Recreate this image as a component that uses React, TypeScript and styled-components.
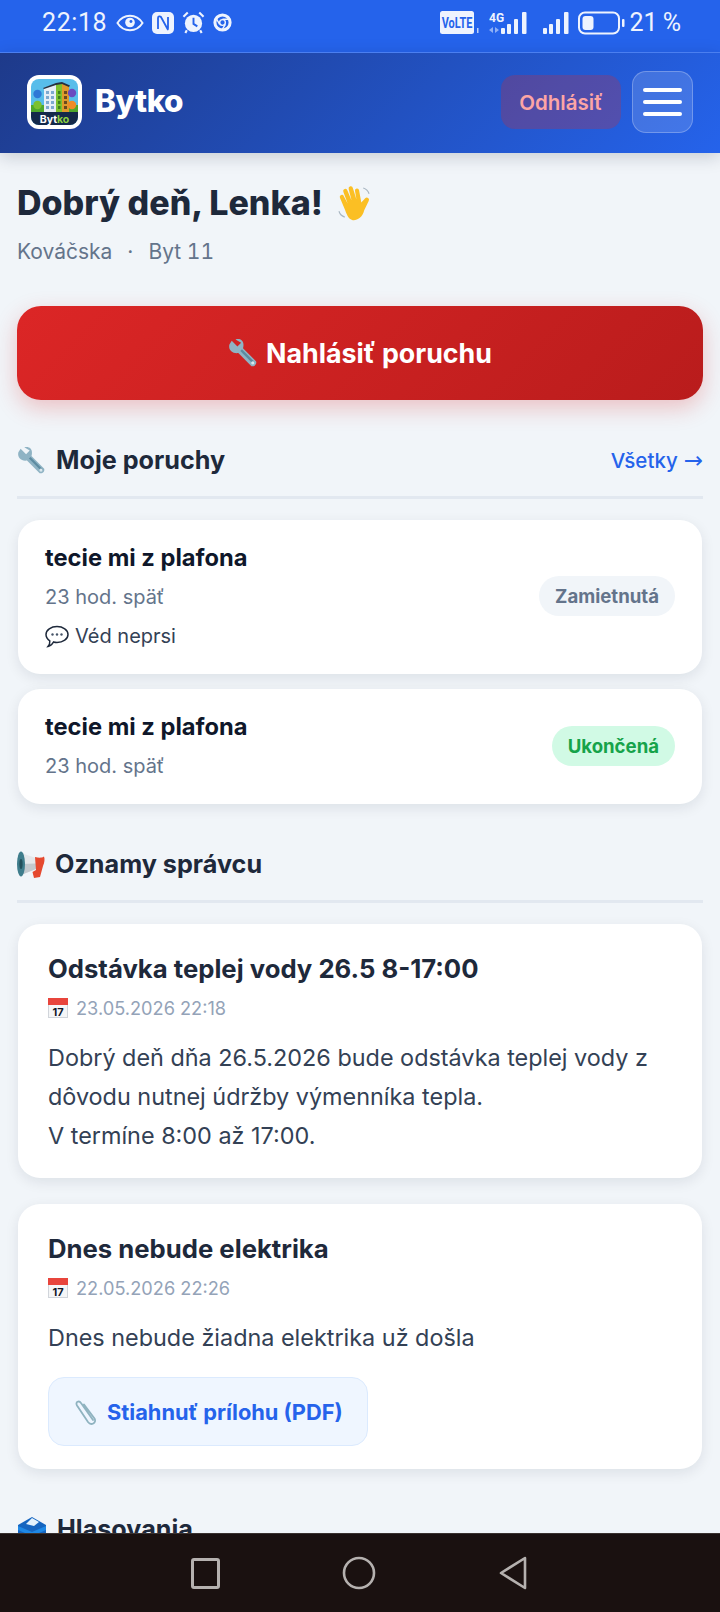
import styled, { createGlobalStyle } from "styled-components";

const GlobalStyle = createGlobalStyle`
  html, body {
    margin: 0;
    padding: 0;
    background: #f1f5f9;
  }
  * {
    box-sizing: border-box;
  }
`;

const Screen = styled.div`
  width: 720px;
  height: 1612px;
  display: flex;
  flex-direction: column;
  overflow: hidden;
  font-family: Inter, "Noto Sans", sans-serif;
  color: #1e293b;
  background: #f1f5f9;
`;

const StatusBar = styled.div`
  height: 52px;
  flex: none;
  display: flex;
  align-items: center;
  justify-content: space-between;
  padding: 0 39px 7px 42px;
  background: #2563eb;
  color: #eef3fe;
  font-family: Roboto, sans-serif;
`;

const StatusGroup = styled.div`
  display: flex;
  align-items: center;
  gap: 8px;
`;

const Clock = styled.span`
  font-size: 25px;
  letter-spacing: 0.6px;
  margin-right: 1px;
`;

const SignalSlot = styled.span`
  display: flex;
  margin: 0 0 0 7px;
`;

const Percent = styled.span`
  margin-left: -4px;
  font-size: 25px;
  word-spacing: -1px;
`;

const Header = styled.header`
  height: 101px;
  flex: none;
  display: flex;
  align-items: center;
  padding: 0 27px 2px;
  border-top: 1px solid #4b7ff0;
  background: linear-gradient(135deg, #1e3a8a, #2563eb);
  box-shadow: 0 4px 16px rgba(15, 23, 42, 0.18);
  position: relative;
`;

const Logo = styled.div`
  width: 55px;
  height: 54px;
  border-radius: 12px;
  background: #fff;
  padding: 4px;
  flex: none;
`;

const Brand = styled.span`
  margin: 0 0 3px 13px;
  flex: 1;
  font-size: 31.5px;
  font-weight: 800;
  letter-spacing: -0.5px;
  color: #fff;
`;

const LogoutButton = styled.button`
  width: 120px;
  height: 54px;
  border: 0;
  border-radius: 14px;
  background: rgba(220, 38, 38, 0.25);
  color: #fca5a5;
  font: 600 20.5px Inter, sans-serif;
`;

const MenuButton = styled.button`
  width: 61px;
  height: 62px;
  margin-left: 11px;
  border-radius: 14px;
  border: 1px solid rgba(255, 255, 255, 0.25);
  background: rgba(255, 255, 255, 0.14);
  display: flex;
  flex-direction: column;
  align-items: center;
  justify-content: center;
  gap: 8px;
  padding: 0;
`;

const MenuBar = styled.span`
  width: 39px;
  height: 4px;
  border-radius: 2px;
  background: #fff;
`;

const Main = styled.main`
  flex: 1;
  min-height: 0;
  overflow: hidden;
  padding: 29px 17px 0;
`;

const Greeting = styled.h1`
  margin: 0;
  display: flex;
  align-items: center;
  gap: 14px;
  font-size: 34px;
  line-height: 42px;
  font-weight: 800;
`;

const SubLine = styled.div`
  margin-top: 14px;
  display: flex;
  gap: 15px;
  font-size: 21px;
  line-height: 28px;
  color: #64748b;
  font-variant-numeric: tabular-nums;
`;

const ReportButton = styled.button`
  width: 686px;
  height: 94px;
  margin-top: 40px;
  display: flex;
  align-items: center;
  justify-content: center;
  gap: 8px;
  border: 0;
  border-radius: 24px;
  background: linear-gradient(135deg, #dc2626, #b91c1c);
  box-shadow: 0 8px 22px rgba(220, 38, 38, 0.25);
  color: #fff;
  font: 700 26.8px Inter, sans-serif;
`;

const SectionHead = styled.div<{ $top: number }>`
  display: flex;
  align-items: center;
  justify-content: space-between;
  height: 58px;
  margin-top: ${(p) => p.$top}px;
  padding-bottom: 17px;
  border-bottom: 3px solid #e2e8f0;
`;

const SectionTitle = styled.h2`
  margin: 0;
  display: flex;
  align-items: center;
  gap: 10px;
  font-size: 25.2px;
  font-weight: 700;
`;

const AllLink = styled.a`
  display: flex;
  gap: 6px;
  align-items: center;
  font-size: 20.5px;
  font-weight: 500;
  color: #2563eb;
`;

const LinkArrow = styled.span`
  font-family: "DejaVu Sans", sans-serif;
  font-size: 23px;
  line-height: 1;
`;

const IssueCard = styled.div<{ $top: number }>`
  margin: ${(p) => p.$top}px 1px 0;
  display: flex;
  align-items: center;
  justify-content: space-between;
  padding: 21px 27px 23px 27px;
  border-radius: 22px;
  background: #fff;
  box-shadow: 0 4px 14px rgba(15, 23, 42, 0.09);
`;

const IssueTitle = styled.div`
  font-size: 23.7px;
  line-height: 34px;
  font-weight: 700;
  color: #0f172a;
`;

const IssueTime = styled.div`
  margin-top: 7px;
  font-size: 20px;
  line-height: 30px;
  color: #64748b;
`;

const IssueNote = styled.div`
  margin-top: 9px;
  display: flex;
  align-items: center;
  gap: 6px;
  font-size: 20px;
  line-height: 30px;
  color: #334155;
`;

const Badge = styled.span<{ $green?: boolean }>`
  padding: 8px 16px;
  border-radius: 20px;
  font-size: 18.6px;
  line-height: 24px;
  font-weight: 700;
  background: ${(p) => (p.$green ? "#d1fae5" : "#f1f5f9")};
  color: ${(p) => (p.$green ? "#16a34a" : "#64748b")};
`;

const NoticeCard = styled.article<{ $top: number }>`
  margin: ${(p) => p.$top}px 1px 0;
  padding: 27px 30px 23px;
  border-radius: 22px;
  background: #fff;
  box-shadow: 0 4px 14px rgba(15, 23, 42, 0.09);
`;

const NoticeTitle = styled.h3`
  margin: 0;
  font-size: 25.7px;
  line-height: 36px;
  font-weight: 700;
`;

const NoticeDate = styled.div`
  margin-top: 8px;
  display: flex;
  align-items: center;
  gap: 8px;
  font-size: 18.2px;
  line-height: 26px;
  color: #94a3b8;
`;

const NoticeBody = styled.p`
  margin: 17px 0 0;
  font-size: 23.4px;
  line-height: 39px;
  color: #334155;
`;

const Attachment = styled.a`
  display: flex;
  width: fit-content;
  align-items: center;
  gap: 8px;
  height: 69px;
  margin-top: 20px;
  padding: 0 24px;
  border: 1px solid #dbeafe;
  border-radius: 16px;
  background: #eff6ff;
  color: #2563eb;
  font-size: 21.8px;
  font-weight: 700;
`;

const NavBar = styled.nav`
  height: 79px;
  flex: none;
  display: flex;
  align-items: center;
  justify-content: center;
  gap: 122px;
  padding-right: 2px;
  background: #1a1110;
  border-top: 1px solid #3a3230;
`;

const Spanner = ({ size }: { size: number }) => (
  <svg width={size} height={size} viewBox="0 0 32 32">
    <path d="M4 3 L10 9 L14 5 L8 1.500 C12 0 17 2 16.500 8 C16.400 10 16 11 16 11 L30 25 C31 28 28 31 25 30 L11 16 C5 17 0 13 1.500 7 Z" fill="#8fb3c4" />
    <path d="M14 13 L28 27" stroke="#5d8ba1" strokeWidth="2.500" />
    <circle cx="26.500" cy="26.500" r="1.800" fill="#dbe8ee" />
  </svg>
);

const Wave = () => (
  <svg width="35" height="37" viewBox="0 0 36 38">
    <path d="M8 25 L3 13 a2 2 0 0 1 4 -1.500 L11 19 L6.500 7 a2.200 2.200 0 0 1 4.200 -1.500 L15 16 L12 4 a2.200 2.200 0 0 1 4.300 -1 L20 15 L18.500 6 a2.100 2.100 0 0 1 4.200 -.6 L25 18 L29 13.500 a2.300 2.300 0 0 1 3.600 2.800 L28 26 C26 34 20 37 15.500 36 C11.500 35 9.500 29 8 25 Z" fill="#fbbf24" />
    <path d="M27 3 C30 4 32 6 33 9 M2 27 C3 30 5 32 8 33" stroke="#a9b6c2" strokeWidth="1.200" fill="none" />
  </svg>
);

const Megaphone = () => (
  <svg width="28" height="27" viewBox="0 0 28 27">
    <path d="M4 2 L19 7 L19 18 L4 24 Z" fill="#e4e7ea" />
    <path d="M4 13 L19 12.500 L19 18 L4 24 Z" fill="#c3c9ce" />
    <path d="M18 6 C22 7 25 7 27 5.500 C28 8 27.500 12 26 15 L23 26 L17 27 L15.500 21 L19 19 Z" fill="#e5492f" />
    <ellipse cx="4" cy="13" rx="4" ry="12.500" fill="#3f7d8c" />
    <ellipse cx="4" cy="13" rx="1.600" ry="5" fill="#23505c" />
  </svg>
);

const Speech = () => (
  <svg width="24" height="24" viewBox="0 0 24 24">
    <path d="M12 2.500 C18 2.500 23 6 23 10.500 C23 15 18 18.500 12 18.500 C10.500 18.500 9.500 18.300 8.500 18 C7.500 20 5.500 22 3 22.500 C4.500 20.500 5 18.500 4.800 16.800 C2.500 15.200 1 13 1 10.500 C1 6 6 2.500 12 2.500 Z" fill="#fff" stroke="#1e293b" strokeWidth="1.500" />
    <circle cx="7.500" cy="10.500" r="1.200" fill="#475569" />
    <circle cx="12" cy="10.500" r="1.200" fill="#475569" />
    <circle cx="16.500" cy="10.500" r="1.200" fill="#475569" />
  </svg>
);

const CalendarIcon = () => (
  <svg width="20" height="20" viewBox="0 0 20 20">
    <rect x="0.500" y="0.500" width="19" height="19" fill="#f5f6f7" stroke="#d1d5db" />
    <rect x="0" y="0" width="20" height="7" fill="#e8453c" />
    <text x="10" y="17.500" textAnchor="middle" fontSize="11" fontWeight="700" fontFamily="Inter, sans-serif" fill="#111827">
      17
    </text>
  </svg>
);

const Clip = () => (
  <svg width="26" height="28" viewBox="0 0 26 28">
    <path d="M20 22 L8 5 C6 2 2 4 4 7.500 L15 24 C18 28 24 25 21.500 20.500 L11 6.500" fill="none" stroke="#8fb3c0" strokeWidth="1.800" strokeLinecap="round" />
  </svg>
);

const BallotBox = () => (
  <svg width="30" height="30" viewBox="0 0 30 30">
    <path d="M1 11 L15 3 L29 11 L29 28 L1 28 Z" fill="#1565c0" />
    <path d="M9 10 L15 4 L22 8 L17 12 Z" fill="#e3f2fd" />
    <path d="M1 12 L15 18 L29 12 L29 16 L15 22 L1 16 Z" fill="#1e88e5" />
  </svg>
);

const AppLogo = () => (
  <svg width="47" height="46" viewBox="0 0 47 46">
    <rect width="47" height="46" rx="8" fill="#58bdea" />
    <rect y="26" width="47" height="10" fill="#4fa82c" />
    <path d="M13 9 L25 5 L25 33 L13 33 Z" fill="#e7eef6" />
    <path d="M25 5 L31 4 L31 33 L25 33 Z" fill="#7cc12f" />
    <path d="M31 4 L38 7 L38 33 L31 33 Z" fill="#e09a2b" />
    <path d="M12 9 L25 4 L31 3 L39 6.500 L38 8 L31 5 L25 6 L13 10 Z" fill="#27303f" />
    {[12, 17, 22, 27].map((y) => (
      <g key={y}>
        <rect x="15" y={y} width="3" height="3" fill="#7fa9cf" />
        <rect x="20" y={y} width="3" height="3" fill="#7fa9cf" />
        <rect x="27" y={y} width="2.500" height="3" fill="#3e7f1f" />
        <rect x="33" y={y} width="3" height="3" fill="#6b4a1e" />
      </g>
    ))}
    <circle cx="6.500" cy="15" r="4.200" fill="#2f78d6" />
    <circle cx="41" cy="14" r="4.200" fill="#6a4bc0" />
    <circle cx="6.500" cy="26" r="4.200" fill="#7cc12f" />
    <circle cx="41" cy="26" r="4.200" fill="#ef8a2a" />
    <path d="M0 33 H47 V38 a8 8 0 0 1 -8 8 H8 a8 8 0 0 1 -8 -8 Z" fill="#14294a" />
    <text x="23.500" y="43.500" textAnchor="middle" fontSize="10.500" fontWeight="700" fontFamily="Inter, sans-serif" fill="#fff">
      Byt<tspan fill="#8bd13f">ko</tspan>
    </text>
  </svg>
);

const EyeIcon = () => (
  <svg width="28" height="18" viewBox="0 0 29 18" fill="none">
    <path d="M1.500 9 C5 3.500 9.500 1.500 14.500 1.500 C19.500 1.500 24 3.500 27.500 9 C24 14.500 19.500 16.500 14.500 16.500 C9.500 16.500 5 14.500 1.500 9 Z" stroke="#eef3fe" strokeWidth="2" />
    <circle cx="14.500" cy="8.500" r="5" fill="#eef3fe" />
    <circle cx="15.500" cy="7.500" r="1.500" fill="#2563eb" />
  </svg>
);

const NfcIcon = () => (
  <svg width="22" height="22" viewBox="0 0 22 22">
    <rect width="22" height="22" rx="5" fill="#eef3fe" />
    <path d="M6 17 V6 C6 4 8 4 9 5 L15 16 C16 18 16 18 16 16 V5" fill="none" stroke="#2563eb" strokeWidth="1.800" />
  </svg>
);

const AlarmIcon = () => (
  <svg width="23" height="23" viewBox="0 0 24 24">
    <circle cx="12" cy="13" r="9" fill="#eef3fe" />
    <path d="M1.500 6 L6 1.500 M22.500 6 L18 1.500 M5 20 L3.500 23 M19 20 L20.500 23" stroke="#eef3fe" strokeWidth="2.200" />
    <path d="M12 7 V13.500 L16 16" fill="none" stroke="#2563eb" strokeWidth="2" />
  </svg>
);

const ChromeIcon = () => (
  <svg width="19" height="19" viewBox="0 0 20 20" fill="none">
    <circle cx="10" cy="10" r="8" stroke="#eef3fe" strokeWidth="3.200" />
    <circle cx="10" cy="10" r="3" stroke="#eef3fe" strokeWidth="1.500" />
    <path d="M10 6.500 H18 M7 12 L3 5 M13 12 L9 18.500" stroke="#eef3fe" strokeWidth="1.500" />
  </svg>
);

const VolteIcon = () => (
  <svg width="41" height="23" viewBox="0 0 41 23">
    <rect x="0" y="0" width="34" height="23" rx="2.500" fill="#eef3fe" />
    <text transform="translate(17 17) scale(0.78 1)" textAnchor="middle" fontSize="14" fontWeight="700" fontFamily="Roboto, sans-serif" fill="#2563eb">
      VoLTE
    </text>
    <rect x="37" y="17" width="1.500" height="5" fill="#bcd0f8" />
  </svg>
);

const Signal = ({ label }: { label?: boolean }) => (
  <svg width={label ? 39 : 27} height="24" viewBox={label ? "0 0 39 24" : "12 0 27 24"}>
    {label && (
      <text x="0" y="11" fontSize="12" fontWeight="700" fontFamily="Roboto, sans-serif" fill="#eef3fe">
        4G
      </text>
    )}
    {label && <path d="M0 19 l4 -3 v6 Z M10 19 l-4 -3 v6 Z" fill="#8fb0f5" />}
    <rect x="12" y="17" width="4" height="6" rx="1" fill="#eef3fe" />
    <rect x="18" y="13" width="4" height="10" rx="1" fill="#eef3fe" />
    <rect x="25" y="8" width="4" height="15" rx="1" fill="#eef3fe" />
    <rect x="33" y="1" width="4.500" height="22" rx="1" fill="#eef3fe" />
  </svg>
);

const BatteryIcon = () => (
  <svg width="47" height="24" viewBox="0 0 47 24">
    <rect x="1" y="1.500" width="40" height="21" rx="6" fill="none" stroke="#eef3fe" strokeWidth="2" />
    <rect x="4.500" y="5" width="11" height="14" rx="3" fill="#eef3fe" />
    <rect x="44" y="8" width="2.500" height="8" rx="1" fill="#eef3fe" />
  </svg>
);

export default function App() {
  return (
    <>
      <GlobalStyle />
      <Screen>
        <StatusBar>
          <StatusGroup>
            <Clock>22:18</Clock>
            <EyeIcon />
            <NfcIcon />
            <AlarmIcon />
            <ChromeIcon />
          </StatusGroup>
          <StatusGroup>
            <VolteIcon />
            <Signal label />
            <SignalSlot>
              <Signal />
            </SignalSlot>
            <BatteryIcon />
            <Percent>21 %</Percent>
          </StatusGroup>
        </StatusBar>

        <Header>
          <Logo>
            <AppLogo />
          </Logo>
          <Brand>Bytko</Brand>
          <LogoutButton>Odhlásiť</LogoutButton>
          <MenuButton aria-label="Menu">
            <MenuBar />
            <MenuBar />
            <MenuBar />
          </MenuButton>
        </Header>

        <Main>
          <Greeting>
            Dobrý deň, Lenka! <Wave />
          </Greeting>
          <SubLine>
            <span>Kováčska</span>
            <span>·</span>
            <span>Byt 11</span>
          </SubLine>

          <ReportButton>
            <Spanner size={30} /> Nahlásiť poruchu
          </ReportButton>

          <SectionHead $top={41}>
            <SectionTitle>
              <Spanner size={29} /> Moje poruchy
            </SectionTitle>
            <AllLink>
              Všetky <LinkArrow>→</LinkArrow>
            </AllLink>
          </SectionHead>

          <IssueCard $top={21}>
            <div>
              <IssueTitle>tecie mi z plafona</IssueTitle>
              <IssueTime>23 hod. späť</IssueTime>
              <IssueNote>
                <Speech /> Véd neprsi
              </IssueNote>
            </div>
            <Badge>Zamietnutá</Badge>
          </IssueCard>

          <IssueCard $top={15}>
            <div>
              <IssueTitle>tecie mi z plafona</IssueTitle>
              <IssueTime>23 hod. späť</IssueTime>
            </div>
            <Badge $green>Ukončená</Badge>
          </IssueCard>

          <SectionHead $top={41}>
            <SectionTitle>
              <Megaphone /> Oznamy správcu
            </SectionTitle>
          </SectionHead>

          <NoticeCard $top={21}>
            <NoticeTitle>Odstávka teplej vody 26.5 8-17:00</NoticeTitle>
            <NoticeDate>
              <CalendarIcon /> 23.05.2026 22:18
            </NoticeDate>
            <NoticeBody>
              Dobrý deň dňa 26.5.2026 bude odstávka teplej vody z
              <br />
              dôvodu nutnej údržby výmenníka tepla.
              <br />V termíne 8:00 až 17:00.
            </NoticeBody>
          </NoticeCard>

          <NoticeCard $top={26}>
            <NoticeTitle>Dnes nebude elektrika</NoticeTitle>
            <NoticeDate>
              <CalendarIcon /> 22.05.2026 22:26
            </NoticeDate>
            <NoticeBody>Dnes nebude žiadna elektrika už došla</NoticeBody>
            <Attachment>
              <Clip /> Stiahnuť prílohu (PDF)
            </Attachment>
          </NoticeCard>

          <SectionHead $top={41}>
            <SectionTitle>
              <BallotBox /> Hlasovania
            </SectionTitle>
          </SectionHead>
        </Main>

        <NavBar>
          <svg width="29" height="31" viewBox="0 0 29 31" fill="none">
            <rect x="1.500" y="1.500" width="26" height="28" rx="1.500" stroke="#b5b1af" strokeWidth="3" />
          </svg>
          <svg width="34" height="34" viewBox="0 0 34 34" fill="none">
            <circle cx="17" cy="17" r="15" stroke="#b5b1af" strokeWidth="2.600" />
          </svg>
          <svg width="30" height="34" viewBox="0 0 30 34" fill="none">
            <path d="M27 2 L3 17 L27 32 Z" stroke="#b5b1af" strokeWidth="2.600" strokeLinejoin="round" />
          </svg>
        </NavBar>
      </Screen>
    </>
  );
}
